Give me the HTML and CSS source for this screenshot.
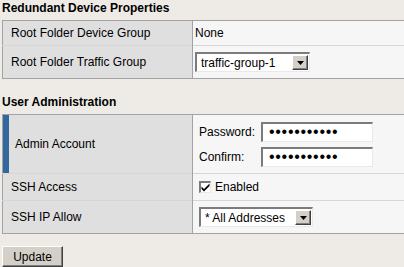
FILE: index.html
```html
<!DOCTYPE html>
<html>
<head>
<meta charset="utf-8">
<link rel="stylesheet" href="styles.css">
</head>
<body>
<div class="page">
  <div class="section-title">Redundant Device Properties</div>
  <table class="props props-first">
    <colgroup><col class="col-label"><col></colgroup>
    <tr class="row-short">
      <td class="label">Root Folder Device Group</td>
      <td class="value value-tight">None</td>
    </tr>
    <tr class="row-select">
      <td class="label">Root Folder Traffic Group</td>
      <td class="value value-tight">
        <span class="select select-traffic"><span class="select-text">traffic-group-1</span><span class="select-btn"><svg width="7" height="4" viewBox="0 0 7 4"><path d="M0 0H7L3.5 4Z" fill="#000"/></svg></span></span>
      </td>
    </tr>
  </table>

  <div class="section-title">User Administration</div>
  <table class="props">
    <colgroup><col class="col-label"><col></colgroup>
    <tr class="row-admin">
      <td class="label label-accent">Admin Account</td>
      <td class="value">
        <div class="pw-grid">
          <span class="pw-label">Password:</span><input class="pw-input" type="password" value="abcdefghijk">
          <span class="pw-label">Confirm:</span><input class="pw-input" type="password" value="abcdefghijk">
        </div>
      </td>
    </tr>
    <tr class="row-mid">
      <td class="label">SSH Access</td>
      <td class="value"><span class="check"><span class="check-box"><svg width="9" height="9" viewBox="0 0 9 9"><path d="M0.5 3.5L3 6L8.5 0.5V3L3 8.5L0.5 6Z" fill="#000"/></svg></span>Enabled</span></td>
    </tr>
    <tr class="row-select">
      <td class="label">SSH IP Allow</td>
      <td class="value">
        <span class="select select-ip"><span class="select-text">* All Addresses</span><span class="select-btn"><svg width="7" height="4" viewBox="0 0 7 4"><path d="M0 0H7L3.5 4Z" fill="#000"/></svg></span></span>
      </td>
    </tr>
  </table>

  <button class="btn">Update</button>
</div>
</body>
</html>
```

FILE: styles.css
```css
html, body {
  margin: 0;
  padding: 0;
  overflow: hidden;
  background: #eeebe6;
}
body {
  font-family: "Liberation Sans", Arial, sans-serif;
  font-size: 12px;
  color: #000;
}
.page {
  padding-left: 2px;
}
.section-title {
  font-weight: bold;
  line-height: 16px;
  height: 20px;
}
.props {
  border-collapse: collapse;
  width: 402px;
  border: 1px solid #a3a3a3;
  border-right: none;
}
.props-first {
  margin-bottom: 15px;
}
.col-label {
  width: 190px;
}
.props td {
  padding: 0;
  border-top: 1px solid #d6d6d6;
}
.props tr:first-child td {
  border-top: 1px solid #a3a3a3;
}
.props td.value {
  border-right: none;
}
.label {
  background: #dfdfdf;
  padding-left: 8px !important;
  border-right: 1px solid #a3a3a3;
}
.label-accent {
  padding-left: 12px !important;
  box-shadow: inset 6px 0 #33689c;
}
.value {
  background: #f6f6f6;
  padding-left: 6px !important;
}
.value-tight {
  padding-left: 2px !important;
}
.row-short td { height: 24px; }
.row-mid td { height: 26px; }
.row-select td { height: 32px; }
.row-admin td { height: 58px; }

.select {
  display: inline-flex;
  align-items: center;
  box-sizing: border-box;
  height: 20px;
  background: #fff;
  border-top: 2px solid #7b7b7b;
  border-left: 2px solid #7b7b7b;
  border-bottom: 1px solid #e9e9e9;
  border-right: 1px solid #e9e9e9;
  vertical-align: middle;
}
.select-traffic { width: 115px; }
.select-ip { width: 114px; }
.select-text {
  flex: 1;
  padding-left: 4px;
  white-space: nowrap;
}
.select-btn {
  box-sizing: border-box;
  width: 16px;
  height: 15px;
  margin-right: 1px;
  background: #d4d0c8;
  border-top: 1px solid #fff;
  border-left: 1px solid #fff;
  border-right: 1px solid #404040;
  border-bottom: 1px solid #404040;
  box-shadow: inset -1px -1px #808080;
  display: flex;
  align-items: center;
  justify-content: center;
}
.select-btn svg { display: block; }

.pw-grid {
  display: grid;
  grid-template-columns: 62px 112px;
  row-gap: 5px;
  align-items: center;
}
.pw-input {
  box-sizing: border-box;
  width: 112px;
  height: 20px;
  margin: 0;
  padding: 0 0 0 6px;
  border-top: 2px solid #7b7b7b;
  border-left: 2px solid #7b7b7b;
  border-bottom: 1px solid #e9e9e9;
  border-right: 1px solid #e9e9e9;
  background: #fff;
  font-family: "Liberation Sans", Arial, sans-serif;
  font-size: 16px;
  letter-spacing: 0.7px;
  outline: none;
}

.check {
  display: inline-flex;
  align-items: center;
  gap: 4px;
}
.check-box {
  box-sizing: border-box;
  width: 12px;
  height: 12px;
  background: #fff;
  border-top: 2px solid #7b7b7b;
  border-left: 2px solid #7b7b7b;
  border-bottom: 1px solid #e9e9e9;
  border-right: 1px solid #e9e9e9;
  display: flex;
  align-items: center;
  justify-content: center;
}
.check-box svg { display: block; }

.btn {
  display: block;
  margin-top: 12px;
  box-sizing: border-box;
  width: 61px;
  height: 21px;
  padding: 0;
  background: #d4d0c8;
  border-top: 1px solid #fff;
  border-left: 1px solid #fff;
  border-right: 1px solid #404040;
  border-bottom: 1px solid #404040;
  box-shadow: inset -1px -1px #808080;
  font-family: "Liberation Sans", Arial, sans-serif;
  font-size: 12px;
  color: #000;
}
```
